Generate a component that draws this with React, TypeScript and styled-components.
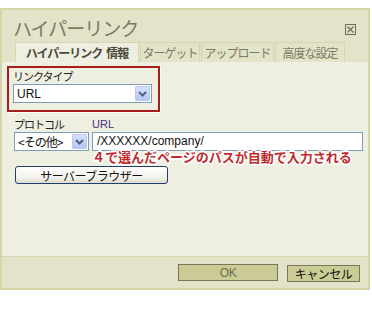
import styled, { createGlobalStyle } from 'styled-components';

const GlobalStyle = createGlobalStyle`
  html, body {
    margin: 0;
    padding: 0;
    background: #ffffff;
  }
  body {
    font-family: "Noto Sans CJK JP", "DejaVu Sans", sans-serif;
    width: 372px;
    height: 310px;
    overflow: hidden;
  }
`;

const Dialog = styled.div`
  margin-top: 8px;
  width: 366px;
  border: 2px solid #d5d5a6;
  background: #e3e3ca;
  display: flex;
  flex-direction: column;
`;

const TitleBar = styled.div`
  height: 32px;
  display: flex;
  align-items: center;
  justify-content: space-between;
  padding: 0 12px 0 11px;
`;

const Title = styled.div`
  font-size: 19px;
  color: #7b7b62;
  letter-spacing: -1px;
  line-height: 1;
  margin-top: 2px;
`;

const CloseBox = styled.div`
  width: 11px;
  height: 11px;
  margin-top: 6px;
  display: flex;
`;

const Tabs = styled.div`
  display: flex;
  padding-left: 13px;
  height: 20px;
`;

const Tab = styled.div<{ $w: number; $active?: boolean }>`
  width: ${(p) => p.$w}px;
  box-sizing: border-box;
  height: 20px;
  display: flex;
  align-items: center;
  justify-content: center;
  gap: 4px;
  font-size: 12px;
  letter-spacing: -1px;
  color: ${(p) => (p.$active ? '#4a4a3a' : '#7a7a62')};
  font-weight: ${(p) => (p.$active ? 700 : 400)};
  background: ${(p) => (p.$active ? '#efefe1' : '#e3e3c9')};
  border: 1px solid #d6d6ad;
  border-bottom: none;
  margin-right: 1px;
`;

const Panel = styled.div`
  position: relative;
  height: 194px;
  background: #efefe1;
  box-sizing: border-box;
  padding: 4px 0 0 5px;
`;

const Highlight = styled.div`
  width: 153px;
  height: 46px;
  box-sizing: border-box;
  border: 2px solid #a51d1d;
  box-shadow: 1px 0 0 #ffffff, 0 1px 0 #ffffff;
  padding: 1px 0 0 4px;
`;

const Label = styled.div<{ $color?: string }>`
  font-size: 11px;
  line-height: 14px;
  height: 15px;
  color: ${(p) => p.$color || '#222222'};
  font-family: ${(p) => (p.$color ? '"Liberation Sans", sans-serif' : 'inherit')};
  letter-spacing: ${(p) => (p.$color ? '0' : '-1px')};
`;

const Select = styled.div<{ $w: number }>`
  width: ${(p) => p.$w}px;
  height: 19px;
  box-sizing: border-box;
  border: 1px solid #7f9db9;
  background: #ffffff;
  display: flex;
  align-items: center;
  justify-content: space-between;
  padding: 0 1px 0 3px;
  font-size: 12px;
  color: #111111;
`;

const SelectText = styled.span<{ $latin?: boolean }>`
  font-family: ${(p) => (p.$latin ? '"Liberation Sans", sans-serif' : 'inherit')};
  letter-spacing: ${(p) => (p.$latin ? '0' : '-1px')};
  line-height: 1;
`;

const DropButton = styled.div`
  width: 15px;
  height: 15px;
  box-sizing: border-box;
  border: 1px solid #b9c9ef;
  border-radius: 1px;
  background: linear-gradient(#d6e2fd, #b4c7f4);
  display: flex;
  align-items: center;
  justify-content: center;
`;

const FieldRow = styled.div`
  display: flex;
  gap: 3px;
  margin: 5px 0 0 7px;
`;

const Field = styled.div`
  display: flex;
  flex-direction: column;
`;

const TextInput = styled.div`
  width: 271px;
  height: 19px;
  box-sizing: border-box;
  border: 1px solid #7f9db9;
  background: #ffffff;
  padding: 0 4px;
  font-family: "Liberation Sans", sans-serif;
  font-size: 12px;
  line-height: 17px;
  color: #111111;
`;

const BrowseButton = styled.div`
  margin: 15px 0 0 8px;
  width: 153px;
  height: 18px;
  box-sizing: border-box;
  border: 1px solid #1d3f6e;
  border-radius: 3px;
  background: linear-gradient(#ffffff, #f1f0ea 70%, #dcd9cc);
  display: flex;
  align-items: center;
  justify-content: center;
  font-size: 12px;
  letter-spacing: -0.5px;
  color: #111111;
`;

const Annotation = styled.div`
  position: absolute;
  left: 90px;
  top: 85px;
  font-size: 13px;
  font-weight: 700;
  color: #c02a2e;
  white-space: nowrap;
  text-shadow: -1px -1px 0 #fff, 1px -1px 0 #fff, -1px 1px 0 #fff, 1px 1px 0 #fff,
    0 -2px 0 #fff, 0 2px 0 #fff, -2px 0 0 #fff, 2px 0 0 #fff;
`;

const Footer = styled.div`
  height: 32px;
  border-top: 1px solid #d6d6ad;
  box-sizing: border-box;
  display: flex;
  align-items: flex-start;
  justify-content: flex-end;
  gap: 9px;
  padding: 7px 8px 0 0;
`;

const FooterButton = styled.div<{ $w: number; $dark?: boolean; $top?: number }>`
  width: ${(p) => p.$w}px;
  height: 17px;
  margin-top: ${(p) => p.$top || 0}px;
  box-sizing: border-box;
  border: 1px solid #787858;
  background: #cbcb95;
  display: flex;
  align-items: center;
  justify-content: center;
  font-size: 12px;
  letter-spacing: -0.5px;
  color: ${(p) => (p.$dark ? '#111111' : '#6e6e58')};
  font-family: ${(p) => (p.$dark ? 'inherit' : '"Liberation Sans", sans-serif')};
`;

const Chevron = () => (
  <svg width="9" height="6" viewBox="0 0 9 6">
    <path d="M1 1 L4.5 4.5 L8 1" stroke="#4d6185" strokeWidth="2" fill="none" />
  </svg>
);

const CloseIcon = () => (
  <svg width="11" height="11" viewBox="0 0 11 11">
    <rect x="0.5" y="0.5" width="10" height="10" fill="none" stroke="#6a6a58" />
    <path d="M2.5 2.5 L8.5 8.5 M8.5 2.5 L2.5 8.5" stroke="#6a6a58" strokeWidth="1.2" />
  </svg>
);

export default function App() {
  return (
    <>
      <GlobalStyle />
      <Dialog>
        <TitleBar>
          <Title>ハイパーリンク</Title>
          <CloseBox>
            <CloseIcon />
          </CloseBox>
        </TitleBar>
        <Tabs>
          <Tab $w={124} $active>
            <span>ハイパーリンク</span>
            <span>情報</span>
          </Tab>
          <Tab $w={60}>ターゲット</Tab>
          <Tab $w={73}>アップロード</Tab>
          <Tab $w={70}>高度な設定</Tab>
        </Tabs>
        <Panel>
          <Highlight>
            <Label>リンクタイプ</Label>
            <Select $w={139}>
              <SelectText $latin>URL</SelectText>
              <DropButton>
                <Chevron />
              </DropButton>
            </Select>
          </Highlight>
          <FieldRow>
            <Field>
              <Label>プロトコル</Label>
              <Select $w={75}>
                <SelectText>&lt;その他&gt;</SelectText>
                <DropButton>
                  <Chevron />
                </DropButton>
              </Select>
            </Field>
            <Field>
              <Label $color="#4a2f86">URL</Label>
              <TextInput>/XXXXXX/company/</TextInput>
            </Field>
          </FieldRow>
          <BrowseButton>サーバーブラウザー</BrowseButton>
          <Annotation>４で選んだページのパスが自動で入力される</Annotation>
        </Panel>
        <Footer>
          <FooterButton $w={100}>OK</FooterButton>
          <FooterButton $w={73} $dark $top={1}>キャンセル</FooterButton>
        </Footer>
      </Dialog>
    </>
  );
}
